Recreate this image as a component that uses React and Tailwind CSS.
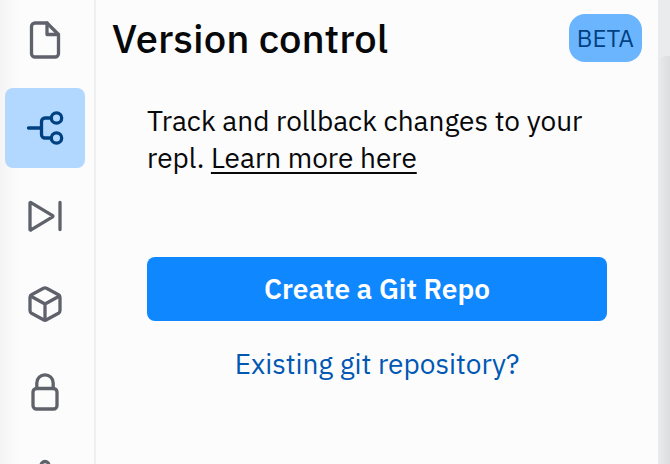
const tools = [
  {
    label: "Files",
    art: (
      <>
        <path d="M26 7H14a3.5 3.5 0 0 0-3.5 3.5v27A3.5 3.5 0 0 0 14 41h20a3.5 3.5 0 0 0 3.5-3.5V18.5Z" />
        <path d="M26 7v11.5h11.5" />
      </>
    ),
  },
  {
    label: "Version control",
    active: true,
    art: (
      <>
        <path d="M7.5 24h13M30 14h-6a3.5 3.5 0 0 0-3.5 3.5v13A3.5 3.5 0 0 0 24 34h6" />
        <circle cx="35.5" cy="14" r="5.2" />
        <circle cx="35.5" cy="34" r="5.2" />
      </>
    ),
  },
  {
    label: "Debugger",
    art: <path d="M9 11v26.5a.6.6 0 0 0 1 .4l21.6-13a.8.8 0 0 0 0-1.3L10 10.6a.6.6 0 0 0-1 .4ZM39 10.5v27" />,
  },
  {
    label: "Packages",
    art: (
      <>
        <path d="M22.5 8.3a3 3 0 0 1 3 0l12 6.500a3 3 0 0 1 1.500 2.600v13.200a3 3 0 0 1-1.500 2.600l-12 6.500a3 3 0 0 1-3 0l-12-6.500A3 3 0 0 1 9 30.600V17.400a3 3 0 0 1 1.500-2.600Z" />
        <path d="M9.500 16 24 24 38.500 16M24 24V40" />
      </>
    ),
  },
  {
    label: "Secrets",
    art: (
      <>
        <rect x="12" y="20.500" width="24" height="20.500" rx="3.500" />
        <path d="M15.800 20.500V15a8.200 8.200 0 0 1 16.400 0v5.500" />
      </>
    ),
  },
  {
    label: "Database",
    art: (
      <>
        <circle cx="24" cy="9.500" r="4" />
        <path d="M24 14v10M10 34l14-10 14 10" />
      </>
    ),
  },
];

function ToolButton({ label, active, art }) {
  return (
    <button
      type="button"
      aria-label={label}
      className={`flex size-20 shrink-0 items-center justify-center rounded-lg ${
        active ? "bg-[#b2d8ff] text-[#004182]" : "text-[#5f626b]"
      }`}
    >
      <svg
        viewBox="0 0 48 48"
        className="size-12"
        fill="none"
        stroke="currentColor"
        strokeWidth="3.3"
        strokeLinecap="round"
        strokeLinejoin="round"
        aria-hidden="true"
      >
        {art}
      </svg>
    </button>
  );
}

export default function App() {
  return (
    <div className="flex h-screen overflow-hidden bg-[#fcfcfc] font-['IBM_Plex_Sans',Roboto,sans-serif] text-[#07080a]">
      <nav className="flex w-24 shrink-0 flex-col items-center gap-2 overflow-hidden border-r-2 border-[#eeeff0] bg-linear-to-r from-[#f4f4f4] to-[#fcfcfc] to-20% pr-1">
        {tools.map((tool) => (
          <ToolButton key={tool.label} {...tool} />
        ))}
      </nav>

      <main className="min-w-0 flex-1">
        <header className="flex items-center justify-between px-4 pt-3.5">
          <h1 className="text-[40px] leading-12 font-medium">Version control</h1>
          <span className="flex h-12 items-center rounded-2xl bg-[#6bb5ff] px-2 text-2xl text-[#004182]">BETA</span>
        </header>

        <section className="flex flex-col px-[51px] pt-10">
          <p className="text-[28px] leading-[37px]">
            Track and rollback changes to your repl.{" "}
            <a href="#learn" className="underline decoration-2 underline-offset-4">
              Learn more here
            </a>
          </p>
          <button type="button" className="mt-[81px] h-16 rounded-lg bg-[#0f87ff] text-[28px] font-semibold text-white">
            Create a Git Repo
          </button>
          <a href="#existing" className="mt-6 self-center text-[28px] leading-[38px] text-[#0058b3]">
            Existing git repository?
          </a>
        </section>
      </main>

      <div className="flex w-3 shrink-0 bg-[#e9ebed] pt-14">
        <div className="flex-1 rounded-tl-lg bg-linear-to-r from-[#e9ebed] to-[#dcdddf]" />
      </div>
    </div>
  );
}
